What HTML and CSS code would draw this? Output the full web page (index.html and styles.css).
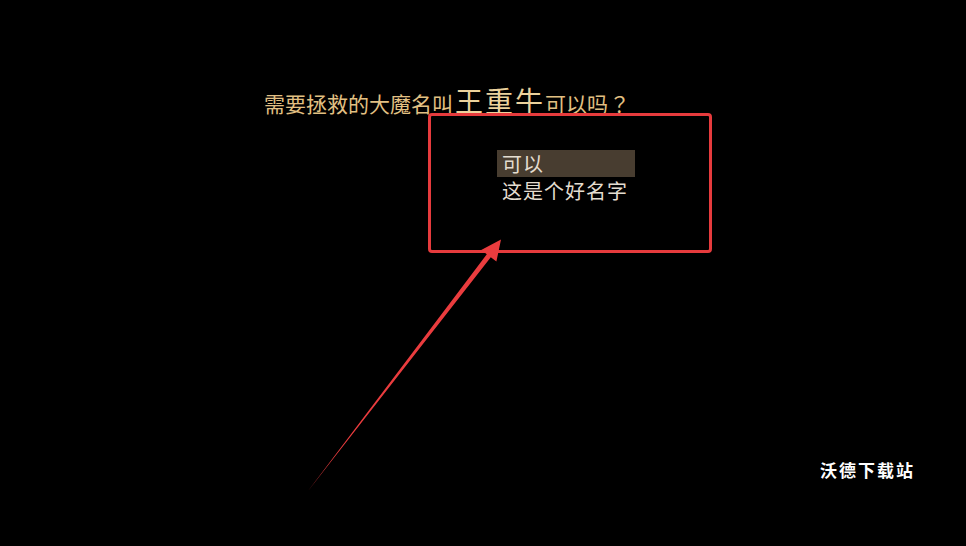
FILE: index.html
```html
<!DOCTYPE html>
<html lang="zh-CN">

<head>
    <meta charset="UTF-8">
    <meta name="viewport" content="width=device-width, initial-scale=1.0">
    <title>命名</title>
    <link rel="stylesheet" href="styles.css">
</head>

<body>
    <div class="screen">
        <div class="dialog">
            <p class="question">需要拯救的大魔名叫<span class="hero-name">王重牛</span>可以吗<span class="mark" lang="zh-TW">？</span></p>
            <ul class="choices">
                <li class="choice selected">可以</li>
                <li class="choice">这是个好名字</li>
            </ul>
        </div>

        <!-- red callout over the choice list -->
        <div class="callout-box"></div>
        <svg class="callout-arrow" width="966" height="546" viewBox="0 0 966 546">
            <polygon fill="#ea3c3e" points="308,491 486.8,254.3 481.2,250 501,239.5 496.4,261.6 490.8,257.3" />
        </svg>

        <div class="watermark">沃德下载站</div>
    </div>
</body>

</html>
```

FILE: styles.css
```css
html,
body {
    margin: 0;
    background: #000;
}

body {
    font-family: "Noto Sans CJK SC", "Noto Sans", sans-serif;
}

.screen {
    position: relative;
    width: 966px;
    height: 546px;
    overflow: hidden;
    background: #000;
}

.dialog {
    padding-top: 84px;
}

.question {
    margin: 0 0 0 264px;
    color: #e2c083;
    font-size: 21px;
    line-height: 32px;
}

.hero-name {
    font-size: 28px;
    letter-spacing: 2px;
    margin-left: 2px;
    color: #ecd29c;
}

.mark {
    font-family: "Noto Sans CJK TC", "Noto Sans CJK SC", sans-serif;
    margin-left: 1px;
}

.choices {
    list-style: none;
    margin: 31px 0 0 497px;
    padding: 0;
    width: 138px;
}

.choice {
    color: #e4ddd0;
    font-size: 20px;
    line-height: 27px;
    height: 27px;
    padding-left: 5px;
    white-space: nowrap;
    letter-spacing: 1px;
}

.choice.selected {
    background: #483d30;
}

.callout-box {
    position: absolute;
    left: 428px;
    top: 113px;
    width: 278px;
    height: 134px;
    border: 3px solid #e63b3d;
    border-radius: 4px;
}

.callout-arrow {
    position: absolute;
    left: 0;
    top: 0;
}

.watermark {
    position: absolute;
    left: 820px;
    top: 457px;
    color: #fff;
    font-size: 17px;
    font-weight: 700;
    letter-spacing: 2px;
}
```
